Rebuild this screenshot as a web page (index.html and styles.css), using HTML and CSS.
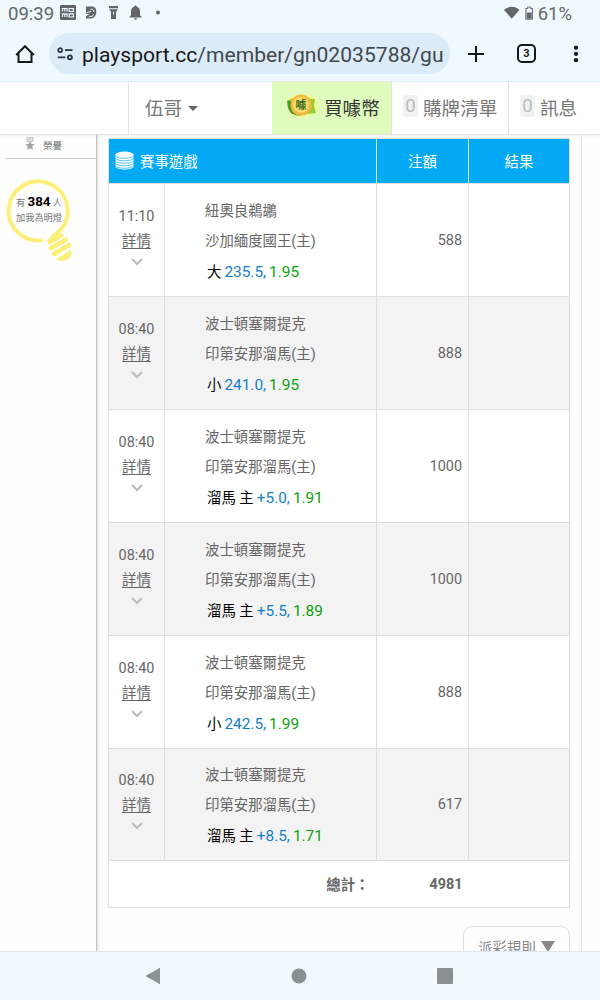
FILE: index.html
```html
<!DOCTYPE html>
<html lang="zh-Hant">
<head>
  <meta charset="UTF-8">
  <meta name="viewport" content="width=device-width, initial-scale=1.0">
  <title>賽事遊戲</title>
  <link rel="stylesheet" href="styles.css">
</head>
<body>
  <div class="status-bar">
    <span class="clock">09:39</span>
    <svg class="status-icons" width="106" height="18" viewBox="0 0 106 18" fill="#626668">
      <rect x="0" y="1" width="16" height="15" rx="1"/>
      <path d="M2.500 7.500v-3h4.600v3M4.800 4.500v3M9.200 4.500h4.200v3H9.200zM2.500 13v-3.200h4.600V13M4.800 9.800V13M9.200 9.800h4.200V13H9.200z" fill="none" stroke="#f0f9fd" stroke-width="1.200"/>
      <path d="M26 2.500h6c3 0 4.300 2.500 4.300 5 0 4-2.300 7-5.300 7h-5V12l3.500-1.500L26 9.500z"/>
      <path d="M27 8.500l4-1M30.500 5.500c2.500-1 4 1 3 2.500M29 12.500c2.500.5 4-.5 4.500-2" fill="none" stroke="#f0f9fd" stroke-width="1"/>
      <path d="M49 2h9v2.300h-9zM49 5.200h9l-2 2.500V15h-5V7.700z"/>
      <path d="M53.500 8v2.500" stroke="#f0f9fd"/>
      <path d="M75.500 1.500c.8 0 1.300.6 1.300 1.300 2.200.6 3.200 2.300 3.200 4.500v4l1.500 1.500v.7h-12v-.7L71 11.300v-4c0-2.200 1-3.900 3.200-4.500 0-.7.500-1.300 1.300-1.300zM74 14.200h3a1.500 1.500 0 0 1-3 0z"/>
      <circle cx="98" cy="8.500" r="2"/>
    </svg>
    <svg class="power-icons" width="32" height="16" viewBox="0 0 32 16">
      <path d="M0 4C4.200-.2 11.200-.2 15.400 4L7.700 12.800z" fill="#626668"/>
      <path d="M23.700 1h3v1.500h1.700v10.600h-6.500V2.500h1.800z" fill="none" stroke="#74787a" stroke-width="1.200"/>
      <path d="M22.700 6.500h5v6h-5z" fill="#626668"/>
    </svg>
    <span class="battery">61%</span>
  </div>

  <div class="browser-bar">
    <svg class="home" width="20" height="20" viewBox="0 0 20 20" fill="none" stroke="#16191b" stroke-width="2">
      <path d="M1.200 11L10 2.200 18.800 11M3.500 9.200V18h13V9.200"/>
    </svg>
    <div class="address">
      <svg width="17" height="14" viewBox="0 0 17 14" fill="none" stroke="#2b3438" stroke-width="1.800">
        <circle cx="3.200" cy="3.200" r="2"/>
        <path d="M8 3.200h7.500M.8 10.300h7.500"/>
        <circle cx="12.900" cy="10.300" r="2"/>
      </svg>
      <span class="url"><b>playsport.cc</b>/member/gn02035788/gu</span>
    </div>
    <svg class="plus" width="16" height="16" viewBox="0 0 16 16" stroke="#16191b" stroke-width="2">
      <path d="M8 0v16M0 8h16"/>
    </svg>
    <span class="tabs">3</span>
    <svg class="more" width="6" height="18" viewBox="0 0 6 18" fill="#16191b">
      <circle cx="3" cy="2.700" r="2.100"/><circle cx="3" cy="8.900" r="2.100"/><circle cx="3" cy="15.200" r="2.100"/>
    </svg>
  </div>

  <nav class="site-nav">
    <div class="nav-item nav-blank"></div>
    <div class="nav-item nav-user">伍哥 <i class="caret"></i></div>
    <div class="nav-item nav-coin">
      <svg width="34" height="28" viewBox="0 0 34 28">
        <path d="M1 7l15-5 14 3 3 7-1 9-8 3-9 2-11-5z" fill="#f3fa8c" opacity=".8"/>
        <path d="M2 9c3-2 6-3 10-3l18 1-1 6 2 8-9 1-8 2-8-3z" fill="#9ccc3c"/>
        <path d="M2.500 8.500l5 1v10l6 4.500-7-2.500C3 18 2 13 2.500 8.500z" fill="#4b9a2c"/>
        <circle cx="16" cy="13" r="10.500" fill="#fbb73c"/>
        <circle cx="16" cy="13" r="8" fill="#f6dc6c"/>
        <text class="coin-text" x="16" y="17">噱</text>
      </svg>
      買噱幣
    </div>
    <div class="nav-item nav-cart"><span class="count">0</span>購牌清單</div>
    <div class="nav-item nav-msg"><span class="count">0</span>訊息</div>
  </nav>

  <main class="page">
    <aside class="sidebar">
      <div class="honor">
        <svg width="10" height="14" viewBox="0 0 10 14">
          <path d="M1.500 0h7v4.500L5 6 1.500 4.500z" fill="#c9c9c9"/>
          <path d="M3.700 1v3M6.300 1v3" stroke="#fff" stroke-width=".8"/>
          <path d="M5 4l1.300 2.900 3.500.3-2.600 2.300.8 3.500L5 11.200 2 13l.8-3.500L.2 7.200l3.500-.3z" fill="#a5a5a5"/>
        </svg>
        <span>榮譽</span>
      </div>
      <div class="bulb">
        <svg width="68" height="84" viewBox="0 0 68 84">
          <path d="M36.500 61.300A29.500 29.500 0 1 1 58.500 47C55 53 50 54 44.500 62" fill="none" stroke="#fdf07a" stroke-width="4" stroke-linecap="round"/>
          <g stroke="#fdf07a" stroke-width="4.800" stroke-linecap="round">
            <path d="M45 63l11-6.500M46 69L60.500 61M49 75L64 66"/>
          </g>
          <path d="M51 80L66 71c1.500 4.500-.5 8-3.500 9.500s-8 2.500-11.500-.5z" fill="#fdf07a"/>
        </svg>
        <div class="bulb-text">
          <p>有 <strong>384</strong> 人</p>
          <p>加我為明燈</p>
        </div>
      </div>
    </aside>

    <section class="content">
      <table class="bets">
        <colgroup><col class="c-time"><col class="c-game"><col class="c-amount"><col class="c-result"></colgroup>
        <thead>
          <tr>
            <th colspan="2" class="title">
              <div>
                <svg width="19" height="19" viewBox="0 0 19 19">
                  <path d="M.5 3v12.500c0 4 18 4 18 0V3z" fill="#fff"/>
                  <ellipse cx="9.500" cy="3.500" rx="9" ry="3" fill="#fff"/>
                  <path d="M.5 5c2 3 16 3 18 0M.5 7.500c2 3 16 3 18 0M.5 10c2 3 16 3 18 0M.5 12.500c2 3 16 3 18 0M.5 15c2 3 16 3 18 0" fill="none" stroke="#03a9f4" stroke-width=".7"/>
                </svg>
                賽事遊戲
              </div>
            </th>
            <th>注額</th>
            <th>結果</th>
          </tr>
        </thead>
        <tbody id="betRows"></tbody>
        <tfoot>
          <tr>
            <td colspan="2" class="sum-label">總計：</td>
            <td class="sum">4981</td>
            <td></td>
          </tr>
        </tfoot>
      </table>
      <div class="rules">派彩規則<i></i></div>
    </section>
    <div class="gutter"></div>
  </main>

  <footer class="system-nav">
    <svg width="16" height="18" viewBox="0 0 16 18" fill="#8b9092"><path d="M.5 9L15 .8v16.400z"/></svg>
    <svg width="16" height="16" viewBox="0 0 16 16" fill="#8b9092"><circle cx="8" cy="8" r="7.500"/></svg>
    <svg width="16" height="16" viewBox="0 0 16 16" fill="#8b9092"><rect width="16" height="16" rx="1"/></svg>
  </footer>

  <script src="script.js"></script>
</body>
</html>
```
FILE: styles.css
```css
* { box-sizing: border-box; margin: 0; padding: 0; }
body {
  width: 600px;
  height: 1000px;
  overflow: hidden;
  display: flex;
  flex-direction: column;
  background: #fff;
  color: #666;
  font-family: Roboto, "Noto Sans CJK TC", sans-serif;
  font-size: 14.4px;
}
svg { display: block; flex-shrink: 0; }

/* phone status bar */
.status-bar {
  height: 28px;
  flex-shrink: 0;
  display: flex;
  align-items: center;
  padding: 0 28px 0 8px;
  background: #f0f9fd;
  color: #626668;
  font-size: 18.5px;
}
.clock { width: 52px; }
.status-icons { margin-top: -3px; }
.power-icons { margin: 0 2px 0 auto; }

.browser-bar {
  height: 54px;
  flex-shrink: 0;
  display: flex;
  align-items: center;
  background: #f0f9fd;
  padding: 0 21px 2px 15px;
  border-bottom: 1px solid #e4eef2;
}
.address {
  width: 401px;
  height: 41px;
  margin-left: 14px;
  padding-left: 8px;
  border-radius: 21px;
  background: #dcebf8;
  display: flex;
  align-items: center;
}
.url {
  margin-left: 8px;
  padding-top: 1px;
  font-size: 21.1px;
  color: #3f484c;
  white-space: nowrap;
}
.url b { font-weight: 400; color: #16191b; }
.plus { margin-left: 18px; }
.tabs {
  width: 19px;
  height: 19px;
  margin-left: 33px;
  border: 2px solid #16191b;
  border-radius: 5px;
  color: #16191b;
  font-size: 11px;
  font-weight: 700;
  line-height: 15px;
  text-align: center;
}
.more { margin-left: auto; }

/* site header */
.site-nav {
  height: 53px;
  flex-shrink: 0;
  display: flex;
  position: relative;
  z-index: 1;
  background: #fff;
  border-bottom: 1px solid #e3e3e3;
  box-shadow: 0 1px 2px rgba(0,0,0,0.06);
  font-size: 18.6px;
  color: #777;
}
.nav-item {
  display: flex;
  align-items: center;
  padding-bottom: 4px;
  border-right: 1px solid #e3e3e3;
  white-space: nowrap;
}
.nav-blank { width: 129px; }
.nav-user { width: 143px; padding-left: 16px; border-right: none; }
.nav-coin { width: 120px; padding-left: 13px; background: #e0fcbd; color: #333; gap: 5px; }
.nav-cart { width: 117px; padding-left: 11px; }
.nav-msg { flex: 1; padding-left: 11px; border-right: none; }
.coin-text { font-size: 11px; font-weight: 700; text-anchor: middle; fill: #3c6b20; }
.caret {
  margin: 4px 0 0 6px;
  border: 5px solid transparent;
  border-top-color: #666;
  border-bottom: none;
}
.count {
  width: 15px;
  height: 22px;
  margin-right: 5px;
  border-radius: 3px;
  background: #f1f1f1;
  color: #bbb;
  line-height: 22px;
  text-align: center;
}

.page {
  flex: 1;
  min-height: 0;
  overflow: hidden;
  display: flex;
  background: #fefefe;
}
.sidebar {
  width: 97px;
  border-right: 1px solid #c4c4c4;
  box-shadow: 1px 0 2px rgba(0,0,0,0.15);
}
.honor {
  height: 24px;
  margin-left: 6px;
  padding: 0 0 3px 19px;
  display: flex;
  align-items: center;
  gap: 8px;
  border-bottom: 1px solid #c8c8c8;
  font-size: 9.5px;
}
.honor svg { margin-top: -2px; }
.bulb { display: grid; margin: 20px 0 0 5px; }
.bulb svg, .bulb-text { grid-area: 1 / 1; }
.bulb-text {
  width: 68px;
  padding-top: 15px;
  font-size: 9.2px;
  line-height: 15px;
  text-align: center;
  color: #777;
}
.bulb-text strong { font-size: 13.4px; color: #000; }

.content {
  width: 485px;
  padding: 3px 0 0 11px;
  border-right: 1px solid #e6e6e6;
}
.bets {
  width: 461px;
  table-layout: fixed;
  border-collapse: collapse;
  background: #fff;
}
.bets th, .bets td { border: 1px solid #dedede; }
.c-time { width: 56px; }
.c-game { width: 212px; }
.c-amount { width: 92px; }
.c-result { width: 101px; }
.bets th {
  height: 45px;
  padding-bottom: 2px;
  background: #03a9f4;
  color: #fff;
  font-weight: 400;
}
.title div { display: flex; align-items: center; gap: 6px; padding-left: 6px; }
.bets tbody tr { height: 113px; }
.bets tbody tr:last-child { height: 112px; }
.bets tbody tr:nth-child(even) { background: #f3f3f3; }
.time { text-align: center; line-height: 25px; padding-bottom: 11px; }
.time a { display: block; text-decoration: underline; text-underline-offset: 2px; }
.time svg { margin: 4px auto 0; }
.game { padding: 4px 0 0 40px; line-height: 30px; }
.pick { padding-left: 2px; color: #000; }
.pick span { font-size: 15.4px; margin-left: 3px; }
.pick .line { color: #147fc9; }
.pick .odds { color: #09a009; }
.amount, .sum { text-align: right; padding-right: 6px; }
.bets tfoot tr { height: 47px; font-weight: 700; }
.bets tfoot td { border-left: none; border-right: none; }
.bets tfoot td:first-child { border-left: 1px solid #dedede; }
.bets tfoot td:last-child { border-right: 1px solid #dedede; }
.bets .sum-label { text-align: right; padding: 0 7px 2px 0; }

.rules {
  width: 107px;
  height: 41px;
  margin: 18px 0 0 355px;
  display: flex;
  align-items: center;
  justify-content: center;
  gap: 5px;
  border: 1px solid #dedede;
  border-radius: 9px;
  color: #888;
  white-space: nowrap;
}
.rules i {
  border: 7px solid transparent;
  border-top: 11px solid #888;
  border-bottom: none;
}

.system-nav {
  height: 49px;
  flex-shrink: 0;
  display: flex;
  align-items: center;
  gap: 130px;
  padding-left: 145px;
  background: #f0f9fd;
  border-top: 1px solid #dfe8ec;
}
```
FILE: script.js
```javascript
const bets = [
  { time: '11:10', away: '紐奧良鵜鶘', home: '沙加緬度國王(主)', pick: '大', line: '235.5', odds: '1.95', amount: 588 },
  { time: '08:40', away: '波士頓塞爾提克', home: '印第安那溜馬(主)', pick: '小', line: '241.0', odds: '1.95', amount: 888 },
  { time: '08:40', away: '波士頓塞爾提克', home: '印第安那溜馬(主)', pick: '溜馬 主', line: '+5.0', odds: '1.91', amount: 1000 },
  { time: '08:40', away: '波士頓塞爾提克', home: '印第安那溜馬(主)', pick: '溜馬 主', line: '+5.5', odds: '1.89', amount: 1000 },
  { time: '08:40', away: '波士頓塞爾提克', home: '印第安那溜馬(主)', pick: '小', line: '242.5', odds: '1.99', amount: 888 },
  { time: '08:40', away: '波士頓塞爾提克', home: '印第安那溜馬(主)', pick: '溜馬 主', line: '+8.5', odds: '1.71', amount: 617 }
];

document.getElementById('betRows').innerHTML = bets.map(b => `
  <tr>
    <td class="time">${b.time}<a>詳情</a>
      <svg width="12" height="8" viewBox="0 0 12 8" fill="none" stroke="#bbb" stroke-width="2"><path d="M1 1l5 5 5-5"/></svg>
    </td>
    <td class="game">
      <p>${b.away}</p>
      <p>${b.home}</p>
      <p class="pick">${b.pick}<span class="line">${b.line},</span><span class="odds">${b.odds}</span></p>
    </td>
    <td class="amount">${b.amount}</td>
    <td></td>
  </tr>`).join('');
```
